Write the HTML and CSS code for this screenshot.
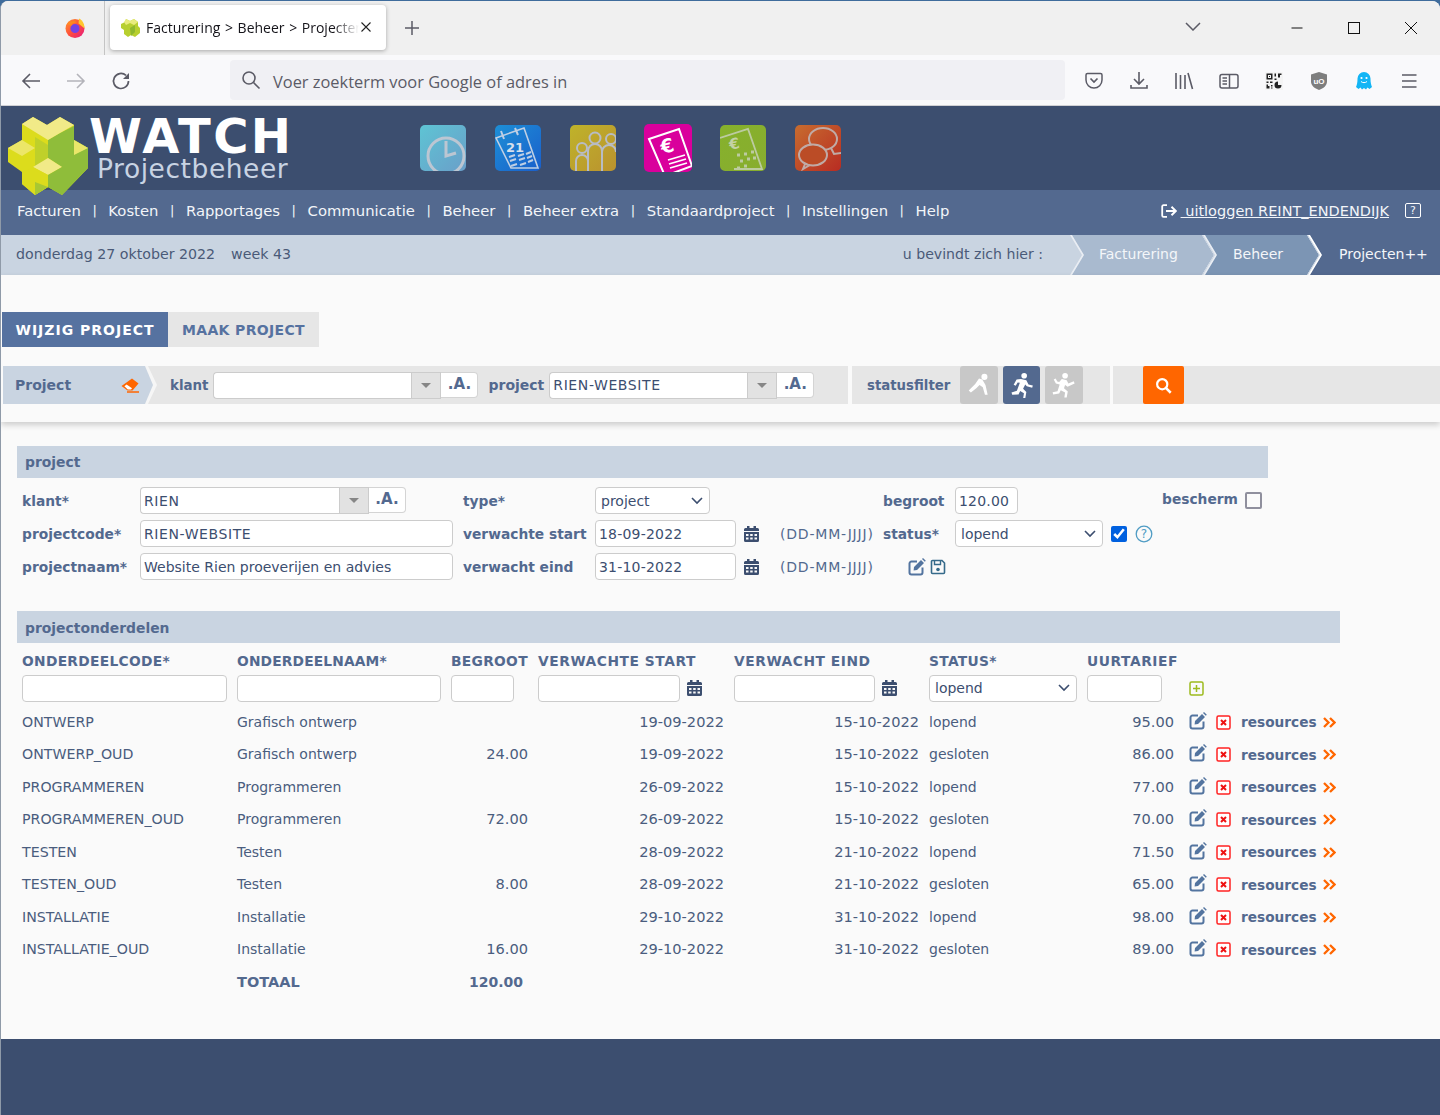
FILE: index.html
```html
<!DOCTYPE html>
<html lang="nl">
<head>
<meta charset="utf-8">
<title>Facturering > Beheer > Projecten++</title>
<link rel="stylesheet" href="styles.css">
</head>
<body>
<svg class="defs" width="0" height="0">
  <defs>
    <symbol id="i-edit" viewBox="0 0 18 18"><path d="M9 3.500H3.500A2 2 0 0 0 1.500 5.500v9a2 2 0 0 0 2 2h9a2 2 0 0 0 2-2V9.500" fill="none" stroke="currentColor" stroke-width="2"/><path d="M6 9 13 2l3 3-7 7-3.400.6zM14 1l1-1 2.800 2.800-1 1z" fill="currentColor"/></symbol>
    <symbol id="i-del" viewBox="0 0 15 15"><rect x="1" y="1" width="13" height="13" rx="1.500" fill="#fff" stroke="#f22" stroke-width="1.500"/><path d="M5 5l5 5M10 5l-5 5" stroke="#e11" stroke-width="2"/></symbol>
    <symbol id="i-cal" viewBox="0 0 15 16"><path d="M0 5V3.500A1.500 1.500 0 0 1 1.500 2H3V0h2.500v2h4V0H12v2h1.500A1.500 1.500 0 0 1 15 3.500V5zM0 6h15v8.500a1.500 1.500 0 0 1-1.500 1.500h-12A1.500 1.500 0 0 1 0 14.500z" fill="#3c4e6f"/><path d="M2 8h2.500v2H2zM6.200 8h2.500v2H6.200zM10.500 8H13v2h-2.500zM2 11.500h2.500v2H2zM6.200 11.500h2.500v2H6.200zM10.500 11.500H13v2h-2.500z" fill="#fafafa"/></symbol>
    <symbol id="i-chev" viewBox="0 0 13 11"><path d="M1 1l4.500 4.500L1 10M7 1l4.500 4.500L7 10" fill="none" stroke="#f60" stroke-width="2.300"/></symbol>
    <symbol id="i-search" viewBox="0 0 20 20"><circle cx="8.500" cy="8.500" r="6" fill="none" stroke="currentColor" stroke-width="2.600"/><path d="M13 13l5.500 5.500" stroke="currentColor" stroke-width="3"/></symbol>
  </defs>
</svg>
<div class="window">
  <div class="tabbar">
    <svg class="ff" viewBox="0 0 20 20"><defs><linearGradient id="ffg" x1="0" y1="0" x2="1" y2="1"><stop offset="0" stop-color="#ff9a2e"/><stop offset=".5" stop-color="#ff4f3a"/><stop offset="1" stop-color="#e31587"/></linearGradient></defs><circle cx="10" cy="10.500" r="9.500" fill="url(#ffg)"/><path d="M14 .5c4 2 5.500 6 5.500 10l-6-5z" fill="#ffc62e"/><circle cx="10" cy="10.500" r="4.500" fill="#7542e5"/><path d="M2 6c3-3.500 8-3.500 10-1.500-3 0-5.500 1-5.500 3.500z" fill="#ff8a1f"/></svg>
    <div class="tabsep"></div>
    <div class="tab">
      <svg class="tabicon" viewBox="0 0 20 20"><path d="M6 1l4 2 4-2 4 3v4l2 2v5l-5 4-4-2-3 2-4-3v-4l-3-2V6l4-2z" fill="#b7cf2f"/><path d="M6 1l4 2 4-2 4 3-4 3-4-2-4 2-2-3z" fill="#e9ec7d"/><path d="M10 10l5-3v7l-4 4z" fill="#8eb82e"/></svg>
      <span class="tabtitle">Facturering &gt; Beheer &gt; Projecten++</span>
      <svg class="tabx" viewBox="0 0 10 10"><path d="M.5.500l9 9M9.500.500l-9 9" stroke="#222" stroke-width="1.100"/></svg>
    </div>
    <svg class="plus" viewBox="0 0 16 16"><path d="M8 1v14M1 8h14" stroke="#5b5b66" stroke-width="1.500"/></svg>
    <div class="grow"></div>
    <svg class="tabdown" viewBox="0 0 16 9"><path d="M1 1l7 7 7-7" fill="none" stroke="#5b5b66" stroke-width="1.500"/></svg>
    <svg class="winbtn" viewBox="0 0 14 14"><path d="M1.500 7h11" stroke="#111"/></svg>
    <svg class="winbtn" viewBox="0 0 14 14"><rect x="1.500" y="1.500" width="11" height="11" fill="none" stroke="#111" stroke-width="1"/></svg>
    <svg class="winbtn" viewBox="0 0 14 14"><path d="M1 1l12 12M13 1L1 13" stroke="#111" stroke-width="1"/></svg>
  </div>
  <div class="toolbar">
    <button class="tbtn"><svg viewBox="0 0 20 20"><path d="M19 10H2M9 3l-7 7 7 7" fill="none" stroke="#5b5b66" stroke-width="1.600"/></svg></button>
    <button class="tbtn"><svg viewBox="0 0 20 20"><path d="M1 10h17M11 3l7 7-7 7" fill="none" stroke="#b4b4ba" stroke-width="1.600"/></svg></button>
    <button class="tbtn"><svg viewBox="0 0 20 20"><path d="M17.500 10a7.500 7.500 0 1 1-2.500-5.600" fill="none" stroke="#5b5b66" stroke-width="1.700"/><path d="M18 2v6h-6z" fill="#5b5b66"/></svg></button>
    <div class="urlbar">
      <svg viewBox="0 0 20 20"><circle cx="8" cy="8" r="6" fill="none" stroke="#5b5b66" stroke-width="1.600"/><path d="M12.500 12.500l6 6" stroke="#5b5b66" stroke-width="1.600"/></svg>
      <span>Voer zoekterm voor Google of adres in</span>
    </div>
    <button class="tbtn"><svg viewBox="0 0 20 20"><path d="M3.500 2.500h13A1.500 1.500 0 0 1 18 4v5a8 8 0 0 1-16 0V4a1.500 1.500 0 0 1 1.500-1.500z" fill="none" stroke="#5b5b66" stroke-width="1.500"/><path d="M6.500 7.500L10 11l3.500-3.500" fill="none" stroke="#5b5b66" stroke-width="1.700"/></svg></button>
    <button class="tbtn"><svg viewBox="0 0 20 20"><path d="M10 1v12M5 8l5 5 5-5M2 14v3h16v-3" fill="none" stroke="#5b5b66" stroke-width="1.600"/></svg></button>
    <button class="tbtn"><svg viewBox="0 0 20 20"><path d="M2 2v16M6.500 4v14M11 4v14M14 2l4.500 16" fill="none" stroke="#5b5b66" stroke-width="1.600"/></svg></button>
    <button class="tbtn"><svg viewBox="0 0 20 20"><rect x="1" y="3.500" width="18" height="13.500" rx="2" fill="none" stroke="#5b5b66" stroke-width="1.500"/><path d="M10.500 3.500V17M3.500 7h4.500M3.500 10h4.500M3.500 13h4.500" fill="none" stroke="#5b5b66" stroke-width="1.500"/></svg></button>
    <button class="tbtn"><svg viewBox="0 0 20 20"><rect x="1" y="1" width="18" height="18" fill="#f4f4f4"/><path d="M2.500 2.500h6v6h-6zM4 4v3h3V4zM5 5h1v1H5zM10.500 2.500h1.500v3h-1.500zM14 2.500h3.500V4H16v2.500h-2zM10.500 7.500h2v1.500h-2zM2.500 10.500h2V12h-2zM6 10.500h2.500V12H6zM2.500 13.500H4V15h1.500v2.500h-3zM7 14h1.500v1.500H7zM7 16.500h1.500v1H7z" fill="#222" fill-rule="evenodd"/><path d="M10.500 14a3.500 3.500 0 1 0 7 0H14v-3.500a3.500 3.500 0 0 0-3.500 3.500z" fill="#222"/></svg></button>
    <button class="tbtn"><svg viewBox="0 0 20 20"><path d="M10 1l8 2.500v7c0 4-3.500 7-8 8.500-4.500-1.500-8-4.500-8-8.500v-7z" fill="#7e7e7e"/><text x="10" y="12.500" class="ublock">uO</text></svg></button>
    <button class="tbtn"><svg viewBox="0 0 20 20"><path d="M10 1a6.500 6.500 0 0 1 6.500 6.500c0 4 .5 6 1.500 8.500l-2.500 2-2-1.500-1.500 2-2-1.500-2 1.500-1.500-2-2 1.500L2 16c1-2.500 1.500-4.500 1.500-8.500A6.500 6.500 0 0 1 10 1z" fill="#12b5f5"/><circle cx="7.500" cy="7" r="1.100" fill="#fff"/><circle cx="12.500" cy="7" r="1.100" fill="#fff"/><path d="M7 10.500c1.500 1.500 4.500 1.500 6 0" fill="none" stroke="#fff" stroke-width="1"/></svg></button>
    <button class="tbtn"><svg viewBox="0 0 20 20"><path d="M3 4h14.500M3 10h14.500M3 16h14.500" stroke="#5b5b66" stroke-width="1.600"/></svg></button>
  </div>
  <header class="masthead">
    <div class="brand">
      <svg class="logo" viewBox="0 0 80 80">
        <path d="M14 7L25 0l14 8L52 0l14 8v15l14 8v20L54 78 40 70 27 78 14 67V55L0 45V31l14-8z" fill="#dcdc1c"/>
        <path d="M40 23l12-7 14-7v14l14 8v20L54 78V50L40 41z" fill="#8fbd3a"/>
        <path d="M27 20l13 8v13l-13 9z" fill="#bfd02a"/>
        <path d="M14 7L25 0l14 8L52 0l14 8-14 8-12 7-13-8z" fill="#f1ea88"/>
        <path d="M0 31l14-8 13 8-13 8z" fill="#ece668"/>
        <path d="M66 23l14 8-14 7z" fill="#e9e66a"/>
        <path d="M25 50l15-9 14 9-14 8z" fill="#f1ea88"/>
        <path d="M25 50l15 8v12l-13 8-13-11V56z" fill="#dcdc1c"/>
        <path d="M40 58l14-8v28l-14-8z" fill="#8fbd3a"/>
        <path d="M27 78l13-8-13-5z" fill="#a8c832"/>
      </svg>
      <div class="brandtext">
        <div class="watch">WATCH</div>
        <div class="pb">Projectbeheer</div>
      </div>
    </div>
    <div class="apps">
      <svg class="app" viewBox="0 0 46 46"><defs><linearGradient id="a1" x1="0" y1="0" x2="1" y2="1"><stop offset="0" stop-color="#5ec4d4"/><stop offset="1" stop-color="#6a9fc9"/></linearGradient><clipPath id="cl"><rect width="46" height="46" rx="5"/></clipPath></defs><g clip-path="url(#cl)"><rect width="46" height="46" fill="url(#a1)"/><circle cx="26" cy="31" r="18" fill="none" stroke="#bcc6d2" stroke-width="3"/><path d="M26 16v15l10-3" fill="none" stroke="#bcc6d2" stroke-width="3"/></g></svg>
      <svg class="app" viewBox="0 0 46 46"><defs><linearGradient id="a2" x1="0" y1="0" x2="1" y2="1"><stop offset="0" stop-color="#1d8fd6"/><stop offset="1" stop-color="#1a5fcb"/></linearGradient></defs><g clip-path="url(#cl)"><rect width="46" height="46" fill="url(#a2)"/><path d="M1 13l28-10 14 40H16z" fill="none" stroke="#bfcfe4" stroke-width="1.600"/><path d="M6 6l3 8M20 3l3 7" stroke="#bfcfe4" stroke-width="2"/><text x="11" y="27" class="appnum">21</text><path d="M14 32l6-2M23 31l6-2M31 29l5-2M15 36l6-2M24 35l6-2M32 33l5-2M16 41l6-2M25 40l6-2M33 37l5-2" stroke="#bfcfe4" stroke-width="2"/></g></svg>
      <svg class="app" viewBox="0 0 46 46"><defs><linearGradient id="a3" x1="0" y1="0" x2="1" y2="1"><stop offset="0" stop-color="#bfb32a"/><stop offset="1" stop-color="#ba922f"/></linearGradient></defs><g clip-path="url(#cl)"><rect width="46" height="46" fill="url(#a3)"/><circle cx="12" cy="23" r="5" fill="none" stroke="#b8bcc4" stroke-width="2"/><circle cx="25" cy="13" r="5.500" fill="none" stroke="#b8bcc4" stroke-width="2"/><circle cx="41" cy="14" r="5" fill="none" stroke="#b8bcc4" stroke-width="2"/><path d="M6 46V36a6 6 0 0 1 12 0v10M18 46V26a7 7 0 0 1 14 0v20M32 46V27a6 6 0 0 1 14 0" fill="none" stroke="#b8bcc4" stroke-width="2"/></g></svg>
      <svg class="app app-big" viewBox="0 0 48 48"><defs><clipPath id="cl2"><rect width="48" height="48" rx="5"/></clipPath></defs><g clip-path="url(#cl2)"><rect width="48" height="48" fill="#d9009c"/><path d="M5 15L35 5l13 37-27 10z" fill="none" stroke="#fff" stroke-width="2"/><text x="17" y="29" class="appeuro" transform="rotate(-15 22 24)">€</text><path d="M24 36l17-5M25 40l17-5M26 44l17-5" stroke="#fff" stroke-width="1.800"/></g></svg>
      <svg class="app" viewBox="0 0 46 46"><defs><linearGradient id="a5" x1="0" y1="0" x2="1" y2="1"><stop offset="0" stop-color="#86b12c"/><stop offset="1" stop-color="#88ad2f"/></linearGradient></defs><g clip-path="url(#cl)"><rect width="46" height="46" fill="url(#a5)"/><path d="M0 13L28 4l14 40H14" fill="none" stroke="#bccba0" stroke-width="1.800"/><text x="9" y="24" class="appeuro2" transform="rotate(-10 14 18)">€</text><path d="M17 30h3M24 29h3M31 27h3M20 36h3M27 34h3M33 33h3M17 43h3M24 41h3" stroke="#bccba0" stroke-width="3"/></g></svg>
      <svg class="app" viewBox="0 0 46 46"><defs><linearGradient id="a6" x1="0" y1="0" x2="1" y2="1"><stop offset="0" stop-color="#c76c2f"/><stop offset="1" stop-color="#b82c22"/></linearGradient></defs><g clip-path="url(#cl)"><rect width="46" height="46" fill="url(#a6)"/><ellipse cx="28" cy="14" rx="14" ry="11" fill="none" stroke="#c0aaa5" stroke-width="2"/><path d="M36 23l3 6 7-1" fill="none" stroke="#c0aaa5" stroke-width="2"/><ellipse cx="18" cy="30" rx="14" ry="10.500" fill="#bb4c26" stroke="#c0aaa5" stroke-width="2"/><path d="M10 39l-2 5 7-4" fill="none" stroke="#c0aaa5" stroke-width="2"/></g></svg>
    </div>
  </header>
  <nav class="mainnav">
    <a>Facturen</a><i>|</i><a>Kosten</a><i>|</i><a>Rapportages</a><i>|</i><a>Communicatie</a><i>|</i><a>Beheer</a><i>|</i><a>Beheer extra</a><i>|</i><a>Standaardproject</a><i>|</i><a>Instellingen</a><i>|</i><a>Help</a>
    <div class="grow"></div>
    <svg class="loginicon" viewBox="0 0 18 14"><path d="M6 1.200H2.500A1.300 1.300 0 0 0 1.200 2.500v9a1.300 1.300 0 0 0 1.300 1.300H6" fill="none" stroke="#fff" stroke-width="1.800"/><path d="M5 7h9M10.500 2.800L14.800 7l-4.300 4.200" fill="none" stroke="#fff" stroke-width="2"/></svg>
    <a class="logout">&nbsp;uitloggen REINT_ENDENDIJK</a>
    <span class="helpbox">?</span>
  </nav>
  <div class="crumbbar">
    <span class="date">donderdag 27 oktober 2022</span>
    <span class="week">week 43</span>
    <div class="grow"></div>
    <span class="here">u bevindt zich hier :</span>
    <div class="crumb c1"><span>Facturering</span></div>
    <div class="crumb c2"><span>Beheer</span></div>
    <div class="crumb c3"><span>Projecten++</span></div>
  </div>
  <section class="toparea">
    <div class="modetabs">
      <a class="mode m1 active">WIJZIG PROJECT</a><a class="mode m2">MAAK PROJECT</a>
    </div>
    <div class="filterbar">
      <div class="fproject"><span class="fpinner"><span>Project</span>
        <svg class="eraser" viewBox="0 0 18 15"><path d="M11 .5l6.500 5-6 7H6.500L.5 8z" fill="#f60"/><path d="M3.400 8.300l2.200-1.800 5.400 3.700-1 1.200H6.800z" fill="#fff"/><path d="M6 14h12" stroke="#f60" stroke-width="1.500"/></svg></span></div>
      <div class="fgroup g1">
        <label class="lk">klant</label>
        <div class="combo c-filter"><input type="text" value=""><span class="combobtn"></span></div>
        <button class="abtn">.A.</button>
        <label class="l2">project</label>
        <div class="combo c-filter"><input class="caps" type="text" value="RIEN-WEBSITE"><span class="combobtn"></span></div>
        <button class="abtn">.A.</button>
      </div>
      <div class="fgroup g2">
        <label>statusfilter</label>
        <span class="sbtn"><svg viewBox="0 0 24 24"><circle cx="17" cy="4.500" r="2.800"/><path d="M12 6l3 1 3 5 2 9h-2.500l-2-7-3-2-3 3-5 4-2-2 6-6z"/></svg></span>
        <span class="sbtn on"><svg viewBox="0 0 24 24"><circle cx="14" cy="3.500" r="2.600"/><path d="M11 6.500l5 1 2 4 4 1-.6 2-5-1.300-1.400-1.700-2 4 3 3-1 6H13l.8-5-3.500-2-1.500 3.300L3 21l-.7-2 5-1.700L10 10l-2-.3-1.800 3-1.900-1 2.700-4.700z"/></svg></span>
        <span class="sbtn"><svg viewBox="0 0 24 24"><circle cx="13" cy="3.500" r="2.600"/><path d="M10 6.500l4.500 1 1.500 3 5-2 .8 2-6.500 3-2.300-1.500-1 3 3.500 3-1 5.500h-2.200l.7-4.500-4-2.200-1.500 3-5.500 1-.5-2.200 4.500-.8 2-6.300-3.500-1-2-3.500 1.800-1 1.500 2.800 1.800.5z"/></svg></span>
      </div>
      <div class="fgroup g3"><span class="searchbtn"><svg><use href="#i-search"/></svg></span></div>
    </div>
  </section>
  <main class="content">
    <h2 class="sect sect-project">project</h2>
    <div class="pform">
      <label>klant*</label>
      <div class="combo c-form"><input class="caps" type="text" value="RIEN"><span class="combobtn"></span><button class="abtn">.A.</button></div>
      <label>type*</label>
      <div><select class="sel-type"><option>project</option></select></div>
      <div></div>
      <label>begroot</label>
      <div><input class="in in-beg num" type="text" value="120.00"></div>
      <div class="bescherm"><label>bescherm</label><input type="checkbox"></div>

      <label>projectcode*</label>
      <div><input class="in in-wide caps" type="text" value="RIEN-WEBSITE"></div>
      <label>verwachte start</label>
      <div class="datecell"><input class="in in-date num" type="text" value="18-09-2022"><svg class="cal"><use href="#i-cal"/></svg></div>
      <span class="fmt">(DD-MM-JJJJ)</span>
      <label>status*</label>
      <div class="statuscell"><select class="sel-status"><option>lopend</option></select><input class="chk" type="checkbox" checked>
        <svg class="qm" viewBox="0 0 18 18"><circle cx="9" cy="9" r="7.800" fill="none" stroke="#4f9cc4" stroke-width="1.300"/><text x="9" y="13" class="qmt">?</text></svg></div>
      <div></div>

      <label>projectnaam*</label>
      <div><input class="in in-wide" type="text" value="Website Rien proeverijen en advies"></div>
      <label>verwacht eind</label>
      <div class="datecell"><input class="in in-date num" type="text" value="31-10-2022"><svg class="cal"><use href="#i-cal"/></svg></div>
      <span class="fmt">(DD-MM-JJJJ)</span>
      <div class="saveicons"><svg class="edit-s"><use href="#i-edit"/></svg>
        <svg class="save" viewBox="0 0 16 16"><path d="M2.500 1.500h9.500l2.500 2.500v9.500a1 1 0 0 1-1 1h-11a1 1 0 0 1-1-1v-11a1 1 0 0 1 1-1z" fill="none" stroke="#356a8a" stroke-width="1.600"/><path d="M4.500 2v3.500h6V2" fill="none" stroke="#356a8a" stroke-width="1.400"/><circle cx="8" cy="10.500" r="1.800" fill="#356a8a"/></svg></div>
      <div></div><div></div>
    </div>

    <h2 class="sect sect-parts">projectonderdelen</h2>
    <div class="parts">
      <div class="prow phead"><b>ONDERDEELCODE*</b><b>ONDERDEELNAAM*</b><b>BEGROOT</b><b>VERWACHTE START</b><b>VERWACHT EIND</b><b>STATUS*</b><b>UURTARIEF</b></div>
      <div class="prow pinput">
        <input class="in" type="text"><input class="in" type="text"><input class="in in-b" type="text">
        <div class="datecell"><input class="in in-d2" type="text"><svg class="cal"><use href="#i-cal"/></svg></div>
        <div class="datecell"><input class="in in-d3" type="text"><svg class="cal"><use href="#i-cal"/></svg></div>
        <select class="sel-part"><option>lopend</option></select>
        <input class="in in-u" type="text">
        <svg class="add" viewBox="0 0 15 15"><rect x="1" y="1" width="13" height="13" rx="1.500" fill="none" stroke="#9dbb1e" stroke-width="1.500"/><path d="M7.500 4v7M4 7.500h7" stroke="#9dbb1e" stroke-width="1.500"/></svg>
      </div>
      <div class="prow pdata"><span class="cc">ONTWERP</span><span>Grafisch ontwerp</span><span class="r"></span><span class="r">19-09-2022</span><span class="r">15-10-2022</span><span>lopend</span><span class="r">95.00</span><span class="acts"><svg class="edit"><use href="#i-edit"/></svg><svg class="del"><use href="#i-del"/></svg><a>resources</a><svg class="chev"><use href="#i-chev"/></svg></span></div>
      <div class="prow pdata"><span class="cc">ONTWERP_OUD</span><span>Grafisch ontwerp</span><span class="r">24.00</span><span class="r">19-09-2022</span><span class="r">15-10-2022</span><span>gesloten</span><span class="r">86.00</span><span class="acts"><svg class="edit"><use href="#i-edit"/></svg><svg class="del"><use href="#i-del"/></svg><a>resources</a><svg class="chev"><use href="#i-chev"/></svg></span></div>
      <div class="prow pdata"><span class="cc">PROGRAMMEREN</span><span>Programmeren</span><span class="r"></span><span class="r">26-09-2022</span><span class="r">15-10-2022</span><span>lopend</span><span class="r">77.00</span><span class="acts"><svg class="edit"><use href="#i-edit"/></svg><svg class="del"><use href="#i-del"/></svg><a>resources</a><svg class="chev"><use href="#i-chev"/></svg></span></div>
      <div class="prow pdata"><span class="cc">PROGRAMMEREN_OUD</span><span>Programmeren</span><span class="r">72.00</span><span class="r">26-09-2022</span><span class="r">15-10-2022</span><span>gesloten</span><span class="r">70.00</span><span class="acts"><svg class="edit"><use href="#i-edit"/></svg><svg class="del"><use href="#i-del"/></svg><a>resources</a><svg class="chev"><use href="#i-chev"/></svg></span></div>
      <div class="prow pdata"><span class="cc">TESTEN</span><span>Testen</span><span class="r"></span><span class="r">28-09-2022</span><span class="r">21-10-2022</span><span>lopend</span><span class="r">71.50</span><span class="acts"><svg class="edit"><use href="#i-edit"/></svg><svg class="del"><use href="#i-del"/></svg><a>resources</a><svg class="chev"><use href="#i-chev"/></svg></span></div>
      <div class="prow pdata"><span class="cc">TESTEN_OUD</span><span>Testen</span><span class="r">8.00</span><span class="r">28-09-2022</span><span class="r">21-10-2022</span><span>gesloten</span><span class="r">65.00</span><span class="acts"><svg class="edit"><use href="#i-edit"/></svg><svg class="del"><use href="#i-del"/></svg><a>resources</a><svg class="chev"><use href="#i-chev"/></svg></span></div>
      <div class="prow pdata"><span class="cc">INSTALLATIE</span><span>Installatie</span><span class="r"></span><span class="r">29-10-2022</span><span class="r">31-10-2022</span><span>lopend</span><span class="r">98.00</span><span class="acts"><svg class="edit"><use href="#i-edit"/></svg><svg class="del"><use href="#i-del"/></svg><a>resources</a><svg class="chev"><use href="#i-chev"/></svg></span></div>
      <div class="prow pdata"><span class="cc">INSTALLATIE_OUD</span><span>Installatie</span><span class="r">16.00</span><span class="r">29-10-2022</span><span class="r">31-10-2022</span><span>gesloten</span><span class="r">89.00</span><span class="acts"><svg class="edit"><use href="#i-edit"/></svg><svg class="del"><use href="#i-del"/></svg><a>resources</a><svg class="chev"><use href="#i-chev"/></svg></span></div>
      <div class="prow ptotal"><span></span><b class="tlabel">TOTAAL</b><b class="r tot">120.00</b></div>
    </div>
  </main>
  <footer class="pagefoot"></footer>
</div>
</body>
</html>
```

FILE: styles.css
```css
* { box-sizing: border-box; }
html, body { margin: 0; height: 100%; }
body {
  background: #3f6c9c;
  font-family: "DejaVu Sans", Verdana, sans-serif;
  font-size: 14.2px;
  color: #53698f;
  overflow: hidden;
}
.defs { position: absolute; }
.grow { flex: 1; }
.window {
  display: flex;
  flex-direction: column;
  margin-top: 1px;
  height: 1114px;
  border-left: 1px solid #8f9aa8;
  border-radius: 8px 8px 0 0;
  overflow: hidden;
  background: #fafafa;
}
/* browser chrome */
.tabbar {
  height: 54px;
  flex: none;
  background: #f0f0f0;
  display: flex;
  align-items: center;
}
.ff { width: 20px; height: 20px; margin-left: 64px; flex: none; }
.tabsep { width: 1px; height: 54px; background: #c4c4c4; margin-left: 19px; flex: none; }
.tab {
  width: 276px;
  height: 45px;
  margin: -1px 0 0 5px;
  background: #fff;
  border-radius: 4px;
  box-shadow: 0 1px 4px rgba(0,0,0,.3);
  display: flex;
  align-items: center;
  padding-left: 10px;
  flex: none;
  font-family: "Open Sans", "Noto Sans", sans-serif;
  font-size: 14px;
  color: #15141a;
}
.tabicon { width: 20px; height: 20px; flex: none; }
.tabtitle {
  width: 213px;
  margin-left: 6px;
  white-space: nowrap;
  overflow: hidden;
  word-spacing: 1px;
  -webkit-mask-image: linear-gradient(to right, #000 88%, transparent);
  mask-image: linear-gradient(to right, #000 88%, transparent);
}
.tabx { width: 10px; height: 10px; margin-left: 2px; flex: none; margin-top: -2px; }
.plus { width: 16px; height: 16px; margin-left: 18px; flex: none; }
.tabdown { width: 16px; height: 9px; margin-right: 89px; margin-top: -3px; flex: none; }
.winbtn { width: 14px; height: 14px; margin-right: 43px; flex: none; margin-top: -1px; }
.winbtn:last-child { margin-right: 22px; }
.toolbar {
  height: 51px;
  flex: none;
  background: #f9f9fb;
  border-bottom: 1px solid #d0d0d4;
  display: flex;
  align-items: center;
  padding-left: 7px;
}
.tbtn {
  width: 45px;
  height: 40px;
  border: 0;
  padding: 2px 0 0;
  background: none;
  display: flex;
  align-items: center;
  justify-content: center;
  flex: none;
}
.tbtn svg { width: 20px; height: 20px; }
.ublock { font: bold 8px "Liberation Sans", sans-serif; fill: #fff; text-anchor: middle; }
.urlbar {
  width: 835px;
  height: 40px;
  margin: 0 6px 0 87px;
  background: #f0f0f4;
  border-radius: 4px;
  display: flex;
  align-items: center;
  padding-left: 11px;
  font-family: "Open Sans", "Noto Sans", sans-serif;
  font-size: 16.400px;
  color: #5b5b66;
  flex: none;
}
.urlbar span { padding-top: 2px; }
.urlbar svg { width: 20px; height: 20px; margin-right: 12px; margin-top: -1px; }
/* masthead */
.masthead {
  height: 84px;
  flex: none;
  background: #3c4e6f;
  display: flex;
  position: relative;
  z-index: 1;
}
.brand { width: 419px; height: 84px; display: flex; flex: none; }
.logo { width: 80px; height: 80px; margin: 11px 0 0 7px; flex: none; }
.brandtext { margin-left: 1px; }
.watch { font-weight: 700; font-size: 48px; line-height: 38px; color: #fff; margin-top: 11px; letter-spacing: 2.400px; }
.pb { font-size: 26.500px; line-height: 17px; color: #c8d3e3; margin: 5px 0 0 8px; letter-spacing: .55px; }
.apps { display: flex; align-items: center; gap: 29px; }
.app { width: 46px; height: 46px; flex: none; }
.app-big { width: 48px; height: 48px; margin-right: -1px; margin-left: -1px; }
.appnum { font: bold 13px "DejaVu Sans", sans-serif; fill: #d7e0ec; }
.appeuro { font: bold 19px "DejaVu Sans", sans-serif; fill: #fff; }
.appeuro2 { font: bold 15px "DejaVu Sans", sans-serif; fill: #c4d2a4; }
/* nav */
.mainnav {
  height: 45px;
  flex: none;
  background: #53698f;
  display: flex;
  align-items: center;
  padding: 0 19px 4px 16px;
  color: #f2f5f9;
  white-space: nowrap;
  font-size: 14.800px;
}
.mainnav i { font-style: normal; margin: 0 11.600px; font-size: 13px; }
.loginicon { width: 18px; height: 14px; flex: none; }
.logout { text-decoration: underline; margin-left: 2px; font-size: 14.500px; }
.helpbox {
  width: 16px;
  height: 15px;
  border: 1px solid #fff;
  border-radius: 2px;
  margin-left: 16px;
  font-size: 11px;
  line-height: 13px;
  text-align: center;
}
/* breadcrumb */
.crumbbar {
  height: 40px;
  flex: none;
  background: #c9d4e1;
  display: flex;
  align-items: center;
  padding: 0 0 0 15px;
  color: #4a5a78;
  line-height: 38px;
}
.date, .week, .here { height: 40px; }
.week { margin-left: 16px; }
.here { margin-right: 27px; font-size: 14.100px; }
.crumb {
  position: relative;
  height: 40px;
  background: #e9edf3;
  clip-path: polygon(0 0, calc(100% - 12px) 0, 100% 50%, calc(100% - 12px) 100%, 0 100%, 12px 50%);
  margin-left: -11px;
  flex: none;
  color: #f4f6f9;
  font-size: 14px;
}
.crumb::before {
  content: "";
  position: absolute;
  inset: 0 0 0 2px;
  clip-path: polygon(0 0, calc(100% - 12px) 0, 100% 50%, calc(100% - 12px) 100%, 0 100%, 12px 50%);
}
.crumb span { position: relative; display: block; line-height: 38px; }
.c1 { width: 144px; margin-left: 0; padding-left: 29px; }
.c1::before { background: #a9bacf; }
.c2 { width: 116px; padding-left: 30px; }
.c2::before { background: #7c95b4; }
.c3 { width: 143px; padding-left: 31px; margin-right: -11px; clip-path: polygon(0 0, 100% 0, 100% 100%, 0 100%, 12px 50%); background: #fff; }
.c3::before { background: #53698f; clip-path: polygon(0 0, 100% 0, 100% 100%, 0 100%, 12px 50%); }
/* filter */
.toparea {
  flex: none;
  height: 147px;
  padding: 37px 0 0 1px;
  background: #fafafa;
  box-shadow: 0 3px 6px rgba(0,0,0,.18);
  position: relative;
}
.modetabs { display: flex; height: 35px; }
.mode {
  font-weight: 700;
  font-size: 14px;
  line-height: 36px;
  text-align: center;
  background: #e6e6e6;
  color: #5672a0;
  white-space: nowrap;
}
.m1 { width: 166px; letter-spacing: 1px; }
.m2 { width: 151px; letter-spacing: .35px; }
.mode.active { background: #5672a0; color: #fff; }
.filterbar {
  display: flex;
  height: 38px;
  margin: 19px 0 0 1px;
  font-weight: 700;
  font-size: 13.700px;
}
.fproject {
  width: 155px;
  flex: none;
  background: #e6e6e6;
  position: relative;
}
.fproject::before {
  content: "";
  position: absolute;
  inset: 0;
  background: #f6f6f6;
  clip-path: polygon(0 0, 145px 0, 154px 50%, 145px 100%, 0 100%);
}
.fpinner {
  position: relative;
  display: flex;
  height: 100%;
  align-items: center;
  justify-content: space-between;
  padding: 0 19px 0 12px;
  background: #c9d4e1;
  font-size: 14px;
  clip-path: polygon(0 0, 142px 0, 150px 50%, 142px 100%, 0 100%);
}
.eraser { width: 18px; height: 15px; }
.fgroup { display: flex; align-items: center; height: 100%; background: #e6e6e6; }
.g1 { width: 690px; padding-left: 12px; flex: none; }
.g1 label { margin-right: 5px; }
.g1 .lk { font-size: 13.400px; }
.g1 .l2 { margin-left: 10px; font-size: 14px; }
.g2 { width: 258px; margin-left: 4px; padding-left: 15px; gap: 5px; flex: none; }
.g2 label { margin-right: 5px; font-size: 13.300px; }
.g3 { flex: 1; margin-left: 3px; padding-left: 30px; }
.combo { display: flex; height: 27px; flex: none; }
.combo input {
  flex: 1;
  min-width: 0;
  height: 100%;
  border: 1px solid #ccc;
  border-right: 0;
  border-radius: 4px 0 0 4px;
  padding: 0 3px;
  background: #fff;
  font: 14px "DejaVu Sans", sans-serif;
  color: #3c4e6f;
  outline: 0;
}
.c-filter { width: 228px; }
.c-form { width: 266px; }
.combobtn {
  width: 30px;
  height: 100%;
  flex: none;
  background: #e2e2e2;
  border: 1px solid #ccc;
  position: relative;
}
.combobtn::after {
  content: "";
  position: absolute;
  left: 9px;
  top: 10px;
  border: 5px solid transparent;
  border-top: 5px solid #868686;
  border-bottom: 0;
}
.abtn {
  width: 37px;
  height: 26px;
  padding: 0 0 3px;
  border: 1px solid #d4d4d4;
  border-left: 0;
  border-radius: 0 4px 4px 0;
  background: #fff;
  color: #53698f;
  font: bold 15px "DejaVu Sans", sans-serif;
  flex: none;
}
.sbtn {
  width: 37.500px;
  height: 38px;
  background: #c8c8c8;
  border-radius: 3px;
  display: flex;
  align-items: center;
  justify-content: center;
}
.sbtn.on { background: #53698f; }
.sbtn svg { width: 26px; height: 26px; fill: #fff; }
.searchbtn {
  width: 41px;
  height: 38px;
  background: #f60;
  border-radius: 2px;
  display: flex;
  align-items: center;
  justify-content: center;
  color: #fff;
}
.searchbtn svg { width: 17px; height: 17px; }
/* content */
.content { flex: 1; padding: 24px 0 0 16px; min-height: 0; background: #fafafa; }
.sect {
  margin: 0;
  height: 32px;
  background: #c9d4e1;
  font-size: 13.900px;
  font-weight: 700;
  line-height: 33px;
  padding-left: 8px;
  color: #53698f;
}
.sect-project { width: 1251px; }
.sect-parts { width: 1323px; margin-top: 27.900px; line-height: 34px; }
.pform {
  display: grid;
  grid-template-columns: 118px 323px 132px 185px 103px 72px 207px 100px;
  grid-auto-rows: 33.200px;
  padding: 6px 0 0 5px;
  align-items: center;
}
.pform label { font-weight: 700; font-size: 13.800px; white-space: nowrap; }
.in {
  height: 27px;
  width: 100%;
  border: 1px solid #ccc;
  border-radius: 4px;
  padding: 0 3px;
  background: #fff;
  font: 14px "DejaVu Sans", sans-serif;
  color: #3c4e6f;
  outline: 0;
}
.caps { letter-spacing: .6px; }
.num { letter-spacing: .2px; }
.in-beg { width: 63px; }
.in-wide { width: 313px; }
.in-date { width: 141px; }
.pform select, .parts select {
  height: 27px;
  border: 1px solid #ccc;
  border-radius: 4px;
  background: #fff url("data:image/svg+xml,%3Csvg xmlns='http://www.w3.org/2000/svg' width='12' height='8'%3E%3Cpath d='M1 1l5 5 5-5' fill='none' stroke='%233c4e6f' stroke-width='1.600'/%3E%3C/svg%3E") no-repeat right 6px center;
  -webkit-appearance: none;
  appearance: none;
  font: 14px "DejaVu Sans", sans-serif;
  color: #3c4e6f;
  padding: 0 5px;
  outline: 0;
}
.sel-type { width: 115px; }
.sel-status { width: 148px; flex: none; }
.sel-part { width: 148px; }
.datecell { display: flex; align-items: center; }
.cal { width: 15px; height: 16px; margin-left: 7px; flex: none; }
.pform .cal { margin-left: 8px; }
.fmt { white-space: nowrap; font-size: 14px; letter-spacing: .8px; }
.statuscell { display: flex; align-items: center; }
.chk { width: 16px; height: 16px; margin: 0 0 0 8px; accent-color: #0060df; }
.qm { width: 18px; height: 18px; margin-left: 8px; }
.qmt { font: 12px "DejaVu Sans", sans-serif; fill: #4f9cc4; text-anchor: middle; }
.bescherm { display: flex; align-items: center; gap: 7px; margin-top: -3px; }
.bescherm input {
  -webkit-appearance: none;
  appearance: none;
  width: 17px;
  height: 17px;
  margin: 3px 0 0;
  background: #fafafa;
  border: 2px solid #8f8f9d;
  border-radius: 2px;
  flex: none;
}
.saveicons { display: flex; gap: 4px; align-items: center; margin-left: 25px; }
.edit-s { width: 18px; height: 18px; color: #53749f; flex: none; }
.save { width: 16px; height: 16px; flex: none; }
/* parts */
.parts { padding-left: 5px; }
.prow {
  display: grid;
  grid-template-columns: 205px 204px 77px 186px 185px 148px 87px 170px;
  column-gap: 10px;
  align-items: center;
  white-space: nowrap;
}
.phead { height: 31px; padding-top: 5px; font-size: 13.800px; }
.phead b { letter-spacing: .3px; }
.phead b:nth-child(2) { letter-spacing: .15px; }
.phead b:nth-child(4), .phead b:nth-child(5), .phead b:nth-child(7) { letter-spacing: .55px; }
.pinput { height: 28px; margin-bottom: 3.500px; }
.pdata { height: 32.500px; line-height: 32.500px; color: #4a5d7e; font-size: 14px; align-items: baseline; }
.pdata .r { font-size: 14.600px; }
.pdata .cc { font-size: 14.200px; }
.ptotal { height: 32.500px; }
.tlabel { font-size: 14.500px; }
.tot { font-size: 14px; padding-right: 5px; }
.r { text-align: right; }
.in-b { width: 63px; }
.in-d2 { width: 142px; }
.in-d3 { width: 141px; }
.in-u { width: 75px; }
.add { width: 15px; height: 15px; margin-left: 5px; }
.acts { display: flex; align-items: center; padding-left: 5px; align-self: center; line-height: normal; }
.edit { width: 18px; height: 18px; color: #53749f; flex: none; margin-top: -3px; }
.del { width: 15px; height: 15px; margin-left: 9px; flex: none; }
.acts a { font-weight: 700; font-size: 13.700px; margin-left: 10px; color: #53698f; }
.chev { width: 13px; height: 11px; margin-left: 6px; flex: none; }
.pagefoot { height: 76px; flex: none; background: #3c4e6f; }
```
